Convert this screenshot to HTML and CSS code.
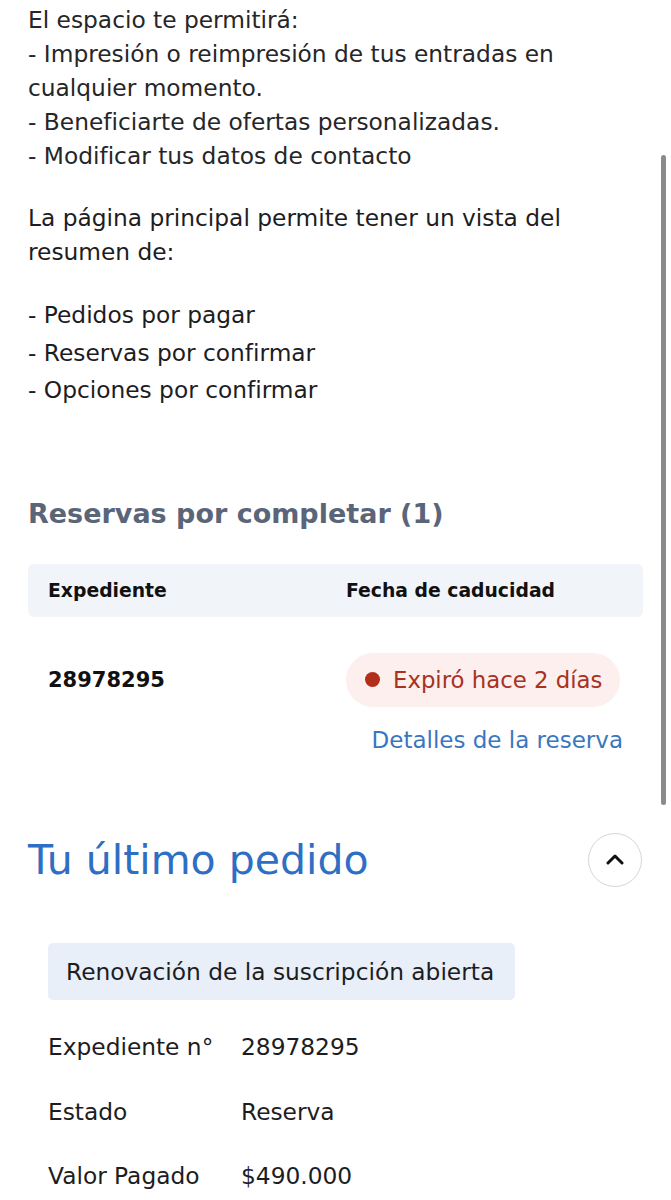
FILE: index.html
```html
<!DOCTYPE html>
<html lang="es">
<head>
<meta charset="utf-8">
<title>Mi espacio</title>
<link rel="stylesheet" href="styles.css">
</head>
<body>
<main class="page">
  <p class="intro">El espacio te permitirá:<br>- Impresión o reimpresión de tus entradas en cualquier momento.<br>- Beneficiarte de ofertas personalizadas.<br>- Modificar tus datos de contacto</p>
  <p class="summary">La página principal permite tener un vista del resumen de:</p>
  <ul class="list">
    <li>- Pedidos por pagar</li>
    <li>- Reservas por confirmar</li>
    <li>- Opciones por confirmar</li>
  </ul>

  <section class="reservas">
    <h2 class="section-title">Reservas por completar (1)</h2>
    <div class="table">
      <div class="thead">
        <div class="th">Expediente</div>
        <div class="th">Fecha de caducidad</div>
      </div>
      <div class="trow">
        <div class="td td-id">28978295</div>
        <div class="td td-status">
          <span class="badge"><span class="dot"></span>Expiró hace 2 días</span>
          <a class="link" href="#">Detalles de la reserva</a>
        </div>
      </div>
    </div>
  </section>

  <section class="pedido">
    <div class="pedido-head">
      <h2 class="pedido-title">Tu último pedido</h2>
      <button class="toggle" aria-label="Contraer">
        <svg width="18" height="11" viewBox="0 0 18 11"><polyline points="2,9 9,2 16,9" fill="none" stroke="#111" stroke-width="3" stroke-linecap="round" stroke-linejoin="round"/></svg>
      </button>
    </div>
    <div class="pedido-body">
      <div class="tag">Renovación de la suscripción abierta</div>
      <dl class="details">
        <div class="drow"><dt>Expediente n°</dt><dd>28978295</dd></div>
        <div class="drow"><dt>Estado</dt><dd>Reserva</dd></div>
        <div class="drow"><dt>Valor Pagado</dt><dd>$490.000</dd></div>
      </dl>
    </div>
  </section>
</main>
<div class="scrollbar"></div>
</body>
</html>
```

FILE: styles.css
```css
* { box-sizing: border-box; }
html, body { margin: 0; padding: 0; background: #fff; }
body {
  font-family: "DejaVu Sans", "Open Sans", sans-serif;
  color: #1d1d1f;
  font-size: 23.3px;
  overflow: hidden;
}
.page { padding: 3px 28px 0 28px; }
p, ul, h2, dl, dd { margin: 0; padding: 0; }
.intro { line-height: 34px; color: #262628; }
.summary { line-height: 34px; margin-top: 28px; }
.list { list-style: none; margin-top: 27px; line-height: 37.5px; }

.reservas { margin-top: 87px; }
.section-title {
  font-size: 27px;
  line-height: 36px;
  font-weight: 700;
  color: #5b6579;
}
.table { margin-top: 32px; }
.thead {
  display: grid;
  grid-template-columns: 298px 1fr;
  background: #f1f4f9;
  border-radius: 6px;
  height: 53px;
  align-items: center;
  padding: 0 20px;
}
.th { font-size: 18.8px; font-weight: 700; color: #111; }
.trow {
  display: grid;
  grid-template-columns: 298px 1fr;
  padding: 36px 20px 0 20px;
}
.td-id {
  font-size: 21px;
  font-weight: 700;
  color: #111;
  height: 54px;
  display: flex;
  align-items: center;
}
.td-status { display: flex; flex-direction: column; align-items: flex-start; }
.badge {
  display: inline-flex;
  align-items: center;
  height: 54px;
  padding: 0 18px 0 19px;
  border-radius: 27px;
  background: #fcefed;
  color: #a8321f;
  font-size: 22.8px;
  gap: 13px;
}
.dot { width: 15px; height: 15px; border-radius: 50%; background: #b22e1a; flex: none; }
.link {
  align-self: flex-end;
  margin-top: 18px;
  line-height: 30px;
  font-size: 23px;
  color: #3b76c0;
  text-decoration: none;
}

.pedido { margin-top: 78px; }
.pedido-head {
  display: flex;
  align-items: center;
  justify-content: space-between;
}
.pedido-title {
  font-size: 41px;
  font-weight: 400;
  color: #2e6ec3;
  line-height: 54px;
}
.toggle {
  width: 54px;
  height: 54px;
  border-radius: 50%;
  border: 1px solid #d6d6d6;
  background: #fff;
  display: flex;
  align-items: center;
  justify-content: center;
  padding: 0;
  margin-right: 1px;
}
.pedido-body { padding-left: 20px; margin-top: 56px; }
.tag {
  display: inline-block;
  background: #e8eff9;
  border-radius: 5px;
  height: 57px;
  line-height: 57px;
  padding: 0 21px 0 18px;
  font-size: 23.3px;
  color: #1d1d1f;
}
.details { margin-top: 15px; }
.drow {
  display: grid;
  grid-template-columns: 193px 1fr;
  height: 64.5px;
  align-items: center;
  font-size: 23.3px;
}
dt, dd { color: #1d1d1f; }

.scrollbar {
  position: fixed;
  right: 5px;
  top: 155px;
  width: 5px;
  height: 650px;
  border-radius: 3px;
  background: #8b8b8b;
}
```
